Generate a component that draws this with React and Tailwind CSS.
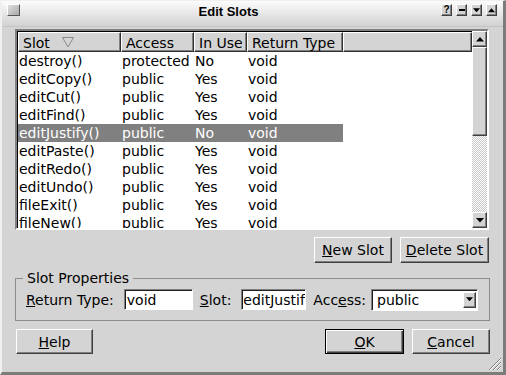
import React from "react";

const RAISED =
  "border border-t-white border-l-white border-r-[#404040] border-b-[#404040] shadow-[inset_-1px_-1px_0_#808080]";
const SUNKEN =
  "border border-t-[#808080] border-l-[#808080] border-r-white border-b-white shadow-[inset_1px_1px_0_#202020]";

const rows = [
  ["destroy()", "protected", "No", "void"],
  ["editCopy()", "public", "Yes", "void"],
  ["editCut()", "public", "Yes", "void"],
  ["editFind()", "public", "Yes", "void"],
  ["editJustify()", "public", "No", "void", true],
  ["editPaste()", "public", "Yes", "void"],
  ["editRedo()", "public", "Yes", "void"],
  ["editUndo()", "public", "Yes", "void"],
  ["fileExit()", "public", "Yes", "void"],
  ["fileNew()", "public", "Yes", "void"],
];

const widths = ["w-[103px]", "w-[73px]", "w-[53px]", "w-[96px]"];

function Tri({ down = true, size = 7 }) {
  return (
    <svg width={size} height={Math.ceil(size / 2) + 1} viewBox="0 0 8 5">
      {down ? (
        <polygon points="0,0 8,0 4,4.5" fill="#000" />
      ) : (
        <polygon points="0,4.5 8,4.5 4,0" fill="#000" />
      )}
    </svg>
  );
}

function Btn({ children, w, def }) {
  return (
    <div
      className={`${w} h-full flex items-center justify-center ${
        def
          ? "border border-black shadow-[inset_1px_1px_0_#fff,inset_-1px_-1px_0_#404040,inset_-2px_-2px_0_#808080]"
          : RAISED
      }`}
    >
      <span>{children}</span>
    </div>
  );
}

export default function App() {
  return (
    <div className="w-[506px] h-[375px] bg-[#d4d4d4] relative overflow-hidden flex flex-col border-l-2 border-t border-l-[#f0f0f0] border-t-[#f0f0f0] border-r-[3px] border-b-[3px] border-r-[#7c7c7c] border-b-[#7c7c7c] text-[14px] text-black font-['DejaVu_Sans',sans-serif] leading-none">
      {/* Title bar */}
      <div className="h-[26px] shrink-0 bg-gradient-to-b from-[#fcfcfc] to-[#d2d2d2] flex items-start pt-[3px] pl-[5px] pr-[6px] border-b border-[#c4c4c4]">
        <div className="w-[13px] h-[12px] border border-t-white border-l-white border-r-[#555] border-b-[#555] bg-gradient-to-br from-[#e0e0e0] to-[#a8a8a8]" />
        <div className="flex-1 text-center font-['Liberation_Sans',sans-serif] font-bold text-[13px] leading-[14px] pt-[1px] pr-[4px]">
          Edit Slots
        </div>
        <div className="flex gap-[4px]">
          <div className={`w-[11px] h-[12px] flex items-center justify-center bg-[#d4d4d4] ${RAISED}`}>
            <span className="font-['Liberation_Sans',sans-serif] font-bold text-[10px] leading-none">?</span>
          </div>
          <div className={`w-[11px] h-[12px] flex items-center justify-center bg-[#d4d4d4] ${RAISED}`}>
            <div className="w-[6px] h-[2px] bg-black" />
          </div>
          <div className={`w-[11px] h-[12px] flex items-center justify-center bg-[#d4d4d4] ${RAISED}`}>
            <Tri down size={7} />
          </div>
          <div className={`w-[11px] h-[12px] flex items-center justify-center bg-[#d4d4d4] ${RAISED}`}>
            <Tri down={false} size={7} />
          </div>
        </div>
      </div>

      {/* List */}
      <div className="ml-[13px] mr-[14px] mt-[2px] h-[201px] shrink-0 flex border-2 border-t-[#808080] border-l-[#808080] border-r-white border-b-white shadow-[inset_1px_1px_0_#000] bg-white">
        <div className="flex-1 flex flex-col overflow-hidden pt-[1px] pl-[1px]">
          <div className="h-[20px] flex shrink-0">
            {["Slot", "Access", "In Use", "Return Type"].map((h, i) => (
              <div
                key={h}
                className={`${widths[i]} h-full bg-[#d4d4d4] border border-t-white border-l-white border-r-[#303030] border-b-[#303030] shadow-[inset_-1px_-1px_0_#808080] flex items-center pl-[4px] pt-[1px]`}
              >
                <span>{h}</span>
                {i === 0 && (
                  <svg width="12" height="11" viewBox="0 0 12 11" className="ml-[12px]">
                    <polygon points="0.5,0.5 11.5,0.5 6,10" fill="none" stroke="#8a8a8a" strokeWidth="1" />
                  </svg>
                )}
              </div>
            ))}
            <div className="flex-1 h-full bg-[#d4d4d4] border border-t-white border-l-white border-r-[#303030] border-b-[#303030] shadow-[inset_-1px_-1px_0_#808080]" />
          </div>
          {rows.map((r) => (
            <div key={r[0]} className="flex h-[18px] shrink-0">
              <div className={`flex ${r[4] ? "bg-[#808080] text-white" : ""}`}>
                {r.slice(0, 4).map((c, i) => (
                  <div key={i} className={`${widths[i]} h-[18px] flex items-center pl-[1px] whitespace-nowrap`}>
                    {c}
                  </div>
                ))}
              </div>
            </div>
          ))}
        </div>
        {/* Scrollbar */}
        <div className="w-[15px] flex flex-col shrink-0">
          <div className={`h-[16px] shrink-0 bg-[#d4d4d4] flex items-center justify-center ${RAISED}`}>
            <Tri down={false} size={8} />
          </div>
          <div className={`h-[89px] shrink-0 bg-[#d4d4d4] ${RAISED}`} />
          <div className="flex-1 bg-[repeating-conic-gradient(#c8c8c8_0%_25%,#ffffff_0%_50%)] bg-[length:2px_2px]" />
          <div className={`h-[16px] shrink-0 bg-[#d4d4d4] flex items-center justify-center ${RAISED}`}>
            <Tri down size={8} />
          </div>
        </div>
      </div>

      {/* New / Delete */}
      <div className="mt-[7px] h-[26px] shrink-0 flex justify-end gap-[8px] mr-[14px]">
        <Btn w="w-[78px]">
          <u>N</u>ew Slot
        </Btn>
        <Btn w="w-[89px]">
          <u>D</u>elete Slot
        </Btn>
      </div>

      {/* Slot Properties */}
      <fieldset className="mt-[7px] ml-[13px] mr-[13px] shrink-0 border border-[#8c8c8c] pl-[7px] pr-[10px] pt-[3px] pb-[10px]">
        <legend className="px-[4px] leading-[16px]">Slot Properties</legend>
        <div className="flex items-center h-[21px] ml-[3px]">
          <span className="whitespace-nowrap">
            <u>R</u>eturn Type:
          </span>
          <div className={`ml-[10px] w-[69px] h-[21px] bg-white flex items-center pl-[2px] shrink-0 ${SUNKEN}`}>void</div>
          <span className="ml-[7px] whitespace-nowrap">
            <u>S</u>lot:
          </span>
          <div className={`ml-[10px] w-[65px] h-[21px] bg-white flex items-center pl-[1px] overflow-hidden whitespace-nowrap shrink-0 ${SUNKEN}`}>
            editJustify()
          </div>
          <span className="ml-[7px] whitespace-nowrap">
            Acc<u>e</u>ss:
          </span>
          <div className={`ml-[5px] w-[107px] h-[22px] bg-white flex items-center pl-[5px] shrink-0 ${SUNKEN}`}>
            <span className="flex-1">public</span>
            <div className={`w-[13px] h-[16px] mr-[1px] bg-[#d4d4d4] flex items-center justify-center ${RAISED}`}>
              <Tri down size={7} />
            </div>
          </div>
        </div>
      </fieldset>

      {/* Bottom buttons */}
      <div className="mt-[8px] h-[25px] shrink-0 flex ml-[14px] mr-[13px]">
        <Btn w="w-[77px]">
          <u>H</u>elp
        </Btn>
        <div className="flex-1" />
        <Btn w="w-[79px]" def>
          <u>O</u>K
        </Btn>
        <div className="w-[8px]" />
        <Btn w="w-[78px]">
          <u>C</u>ancel
        </Btn>
      </div>

      {/* Resize grip */}
      <svg className="absolute right-[1px] bottom-[1px]" width="14" height="14" viewBox="0 0 14 14">
        <line x1="13" y1="1" x2="1" y2="13" stroke="#808080" />
        <line x1="13" y1="5" x2="5" y2="13" stroke="#808080" />
        <line x1="13" y1="9" x2="9" y2="13" stroke="#808080" />
        <line x1="13" y1="2" x2="2" y2="13" stroke="#fff" />
        <line x1="13" y1="6" x2="6" y2="13" stroke="#fff" />
        <line x1="13" y1="10" x2="10" y2="13" stroke="#fff" />
      </svg>
    </div>
  );
}
